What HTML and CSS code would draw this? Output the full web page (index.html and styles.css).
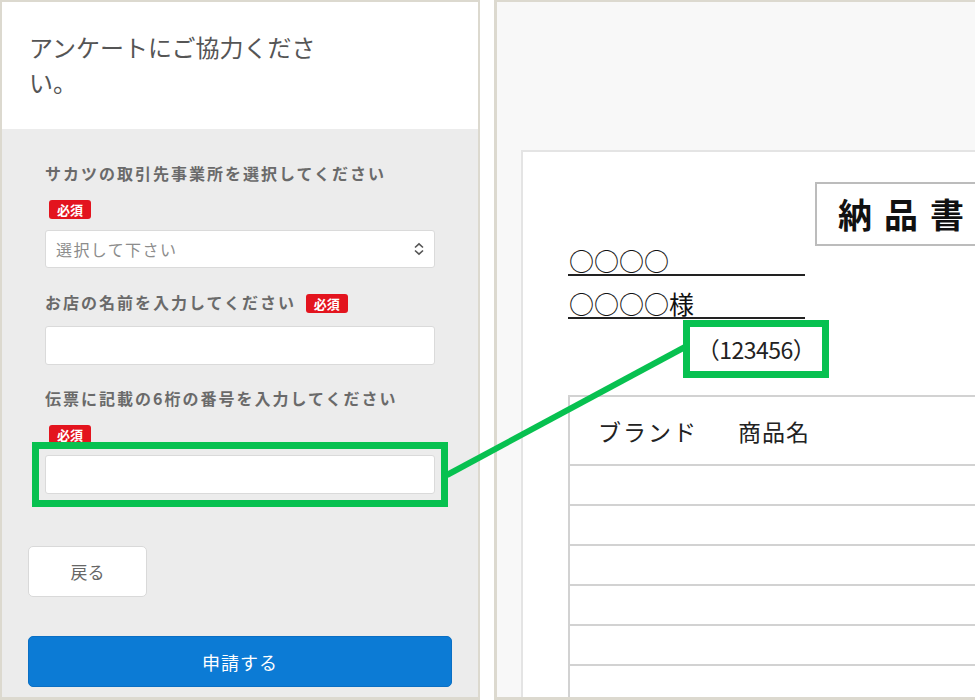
FILE: index.html
```html
<!DOCTYPE html>
<html>
  <head>
    <meta charset="UTF-8">
    <title>アンケート</title>
    <link rel="stylesheet" href="styles.css">
  </head>
<body>
	<div class="page">
		<div class="panel form-panel">
			<div class="head">
				<h1>アンケートにご協力ください。</h1>
			</div>
			<div class="form">
				<div class="fields">
					<p class="label">サカツの取引先事業所を選択してください<br><span class="must">必須</span></p>
					<div class="select">
						<span>選択して下さい</span>
						<svg width="12" height="14" viewBox="0 0 12 14"><path d="M2 5.5 L6 1.8 L10 5.5 M2 8.5 L6 12.2 L10 8.5" fill="none" stroke="#555" stroke-width="1.6"/></svg>
					</div>
					<p class="label second">お店の名前を入力してください <span class="must">必須</span></p>
					<div class="input"></div>
					<p class="label third">伝票に記載の6桁の番号を入力してください<br><span class="must">必須</span></p>
					<div class="input marked"></div>
				</div>
				<div class="actions">
					<button class="back">戻る</button>
					<button class="send">申請する</button>
				</div>
			</div>
		</div>
		<div class="panel doc-panel">
			<div class="doc">
				<div class="doc-title">納品書</div>
				<div class="name">○○○○</div>
				<div class="name">○○○○様</div>
				<div class="code">（123456）</div>
				<div class="table">
					<div class="row head-row"><span class="brand">ブランド</span><span>商品名</span></div>
					<div class="row"></div>
					<div class="row"></div>
					<div class="row"></div>
					<div class="row"></div>
					<div class="row"></div>
					<div class="row"></div>
				</div>
			</div>
		</div>
	</div>
	<!-- 入力欄と伝票番号をつなぐ線 -->
	<svg class="link" width="975" height="700"><line x1="447" y1="475" x2="685" y2="347" stroke="#07c150" stroke-width="6"/></svg>
</body>
</html>
```

FILE: styles.css
```css
body{
	margin:0;
	background:#fff;
	font-family:"Noto Sans CJK JP","Noto Sans",sans-serif;
	position:relative;
	width:975px;
	height:700px;
	overflow:hidden;
}
.page{
	display:flex;
	gap:14px;
	height:700px;
}
.panel{
	box-sizing:border-box;
	border:2px solid #dcd9cf;
	border-bottom-width:3px;
	height:700px;
	overflow:hidden;
}
.form-panel{
	width:480px;
	display:flex;
	flex-direction:column;
}
.head{
	background:#fff;
	height:127px;
	box-sizing:border-box;
	padding:27px 0 0 27px;
}
.head h1{
	margin:0;
	width:300px;
	font-size:24px;
	line-height:35px;
	font-weight:400;
	color:#555;
}
.form{
	flex:1;
	background:#ececec;
	padding-top:27px;
}
.fields{
	padding:0 43px;
}
.label{
	margin:0;
	font-size:16px;
	line-height:35px;
	font-weight:bold;
	color:#6a6a6a;
	letter-spacing:2px;
}
.label.second{margin-top:17px;}
.label.third{margin-top:16px;}
.must{
	display:inline-block;
	vertical-align:middle;
	margin-left:4px;
	width:42px;
	height:19px;
	line-height:19px;
	border-radius:3px;
	background:#e3141e;
	color:#fff;
	font-size:13px;
	font-weight:bold;
	text-align:center;
	letter-spacing:0;
	position:relative;
	top:-1px;
}
.select,.input{
	box-sizing:border-box;
	background:#fff;
	border:1px solid #dadada;
	border-radius:3px;
}
.select{
	margin-top:4px;
	height:38px;
	display:flex;
	align-items:center;
	justify-content:space-between;
	padding:0 9px 0 10px;
	font-size:16px;
	letter-spacing:1.4px;
	color:#8c8c8c;
}
.input{
	margin-top:6px;
	height:39px;
}
.input.marked{
	margin-top:4px;
	position:relative;
}
.input.marked::after{
	content:"";
	position:absolute;
	top:-14px;
	left:-14px;
	right:-14px;
	bottom:-14px;
	border:7px solid #07c150;
}
.actions{
	padding:52px 26px 0;
	display:flex;
	flex-direction:column;
	align-items:flex-start;
	gap:39px;
}
button{
	font-family:inherit;
	border-radius:5px;
	cursor:pointer;
}
.back{
	width:119px;
	height:51px;
	background:#fff;
	border:1px solid #d9d9d9;
	font-size:17px;
	color:#666;
}
.send{
	width:424px;
	height:51px;
	background:#0c7bd5;
	border:1px solid #0a6fc4;
	font-size:18px;
	color:#fff;
	letter-spacing:1px;
}
.doc-panel{
	flex:1;
	border-right:none;
	background:#f8f8f8;
	border-left-width:3px;
	padding:148px 0 0 24px;
}
.doc{
	background:#fff;
	border-top:2px solid #e4e4e4;
	border-left:2px solid #e4e4e4;
	height:600px;
	padding:30px 0 0 45px;
	box-sizing:border-box;
}
.doc-title{
	margin-left:247px;
	height:64px;
	width:200px;
	box-sizing:border-box;
	border:2px solid #bcbcbc;
	font-size:34px;
	font-weight:bold;
	line-height:60px;
	letter-spacing:12px;
	padding-left:21px;
	color:#111;
	white-space:nowrap;
}
.name{
	width:236px;
	height:28px;
	line-height:28px;
	border-bottom:2px solid #222;
	font-size:25px;
	color:#111;
	padding-left:1px;
}
.name:first-of-type{
	line-height:26px;
}
.name + .name{margin-top:13px;}
.code{
	margin:1px 0 0 115px;
	width:146px;
	height:58px;
	box-sizing:border-box;
	border:7px solid #07c150;
	font-size:23px;
	line-height:44px;
	text-align:center;
	color:#222;
	letter-spacing:-0.5px;
	white-space:nowrap;
}
.table{
	margin-top:17px;
	border-top:2px solid #d2d2d2;
	border-left:2px solid #d2d2d2;
	width:500px;
}
.row{
	height:38px;
	border-bottom:2px solid #d2d2d2;
}
.head-row{
	height:69px;
	box-sizing:border-box;
	padding-left:28px;
	display:flex;
	align-items:center;
	font-size:23px;
	color:#222;
	letter-spacing:1px;
}
.head-row .brand{
	margin-right:40px;
	letter-spacing:2px;
}
.link{
	position:absolute;
	top:0;
	left:0;
	pointer-events:none;
}
```
